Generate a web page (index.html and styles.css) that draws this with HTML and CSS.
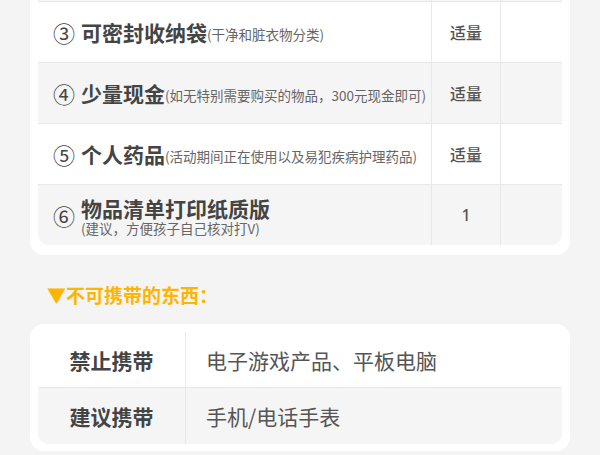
FILE: index.html
```html
<!DOCTYPE html>
<html lang="zh-CN">
	<head>
		<meta charset="UTF-8" />
		<meta name="viewport" content="width=device-width, initial-scale=1.0" />
		<title>携带物品清单</title>
		<link rel="stylesheet" href="styles.css">
	</head>
	<body>
		<div class="page">
			<div class="card card-list">
				<div class="list">
					<div class="list-row cut">
						<div class="cell name"></div>
						<div class="cell qty"></div>
						<div class="cell blank"></div>
					</div>
					<div class="list-row">
						<div class="cell name">
							<span class="num">③</span>
							<span class="title">可密封收纳袋</span><span class="note">(干净和脏衣物分类)</span>
						</div>
						<div class="cell qty">适量</div>
						<div class="cell blank"></div>
					</div>
					<div class="list-row">
						<div class="cell name">
							<span class="num">④</span>
							<span class="title">少量现金</span><span class="note">(如无特别需要购买的物品，300元现金即可)</span>
						</div>
						<div class="cell qty">适量</div>
						<div class="cell blank"></div>
					</div>
					<div class="list-row">
						<div class="cell name">
							<span class="num">⑤</span>
							<span class="title">个人药品</span><span class="note">(活动期间正在使用以及易犯疾病护理药品)</span>
						</div>
						<div class="cell qty">适量</div>
						<div class="cell blank"></div>
					</div>
					<div class="list-row">
						<div class="cell name">
							<span class="num">⑥</span>
							<div class="stack">
								<span class="title">物品清单打印纸质版</span>
								<span class="note">(建议，方便孩子自己核对打V)</span>
							</div>
						</div>
						<div class="cell qty">1</div>
						<div class="cell blank"></div>
					</div>
				</div>
			</div>

			<h3 class="section-title">▼不可携带的东西：</h3>

			<div class="card card-rules">
				<div class="rules">
					<div class="rule-row">
						<div class="rule-label">禁止携带</div>
						<div class="rule-value">电子游戏产品、平板电脑</div>
					</div>
					<div class="rule-row">
						<div class="rule-label">建议携带</div>
						<div class="rule-value">手机/电话手表</div>
					</div>
				</div>
			</div>
		</div>
	</body>
</html>
```

FILE: styles.css
```css
body {
	font-family: "Noto Sans CJK SC", "Noto Sans", sans-serif;
	color: #444;
	background-color: #f4f4f4;
	margin: 0;
}
.page {
	padding: 0 30px;
}
.card {
	background-color: #fff;
	border-radius: 14px;
}
.card-list {
	border-top-left-radius: 0;
	border-top-right-radius: 0;
	padding: 0 8px 10px;
}
.card-rules {
	padding: 8px 8px 7px;
}
.list {
	border-radius: 0 0 10px 10px;
	overflow: hidden;
}
.list-row {
	display: grid;
	grid-template-columns: 1fr 69px 62px;
	height: 60px;
	border-bottom: 1px solid #e8e8e8;
}
.list-row:nth-child(odd) {
	background-color: #f5f5f5;
}
.list-row:last-child {
	border-bottom: none;
}
.list-row.cut {
	height: 1px;
}
.cell {
	display: flex;
	align-items: center;
}
.qty,
.blank {
	border-left: 1px solid #e8e8e8;
}
.qty {
	justify-content: center;
	font-family: "Noto Sans", "Noto Sans CJK SC", sans-serif;
	font-size: 16px;
	font-weight: 500;
	color: #555;
}
.name {
	padding-left: 15px;
	white-space: nowrap;
}
.num {
	font-size: 22px;
	margin-right: 6px;
	color: #444;
}
.title {
	font-size: 21px;
	font-weight: bold;
	color: #444;
	line-height: 24px;
}
.note {
	font-size: 13.5px;
	color: #666;
	line-height: 18px;
	padding-top: 3px;
}
.stack {
	display: flex;
	flex-direction: column;
	margin-top: 2px;
}
.stack .note {
	padding-top: 0;
	line-height: 16px;
}
.section-title {
	margin: 28px 0 17px;
	padding-left: 17px;
	font-size: 19px;
	line-height: 24px;
	font-weight: bold;
	color: #ffb400;
}
.rules {
	border-radius: 0 0 10px 10px;
	overflow: hidden;
}
.rule-row {
	display: grid;
	grid-template-columns: 148px 1fr;
	height: 55px;
	border-bottom: 1px solid #e8e8e8;
}
.rule-row:last-child {
	height: 56px;
	border-bottom: none;
	background-color: #f5f5f5;
}
.rule-label {
	display: flex;
	align-items: center;
	justify-content: center;
	border-right: 1px solid #e8e8e8;
	font-size: 21px;
	font-weight: bold;
	color: #444;
}
.rule-value {
	display: flex;
	align-items: center;
	padding-left: 20px;
	font-size: 21px;
	color: #555;
}
```
